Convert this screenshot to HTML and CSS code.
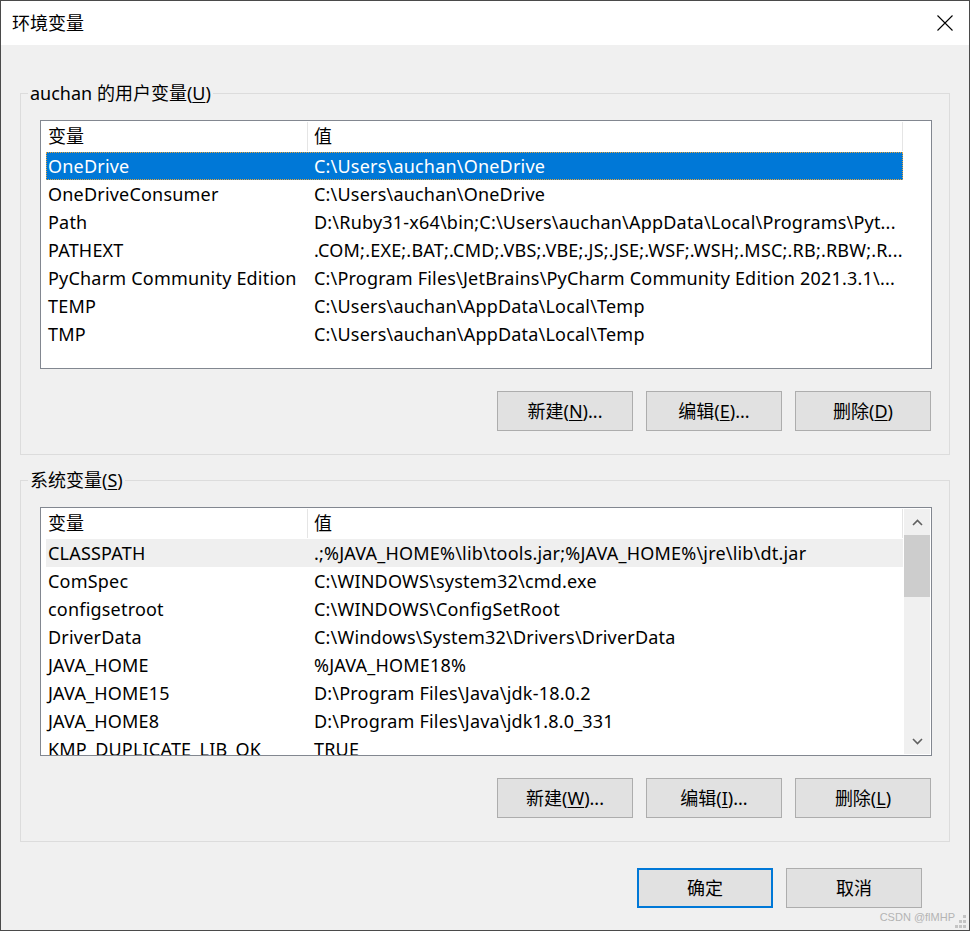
FILE: index.html
```html
<!DOCTYPE html>
<html lang="zh-CN">
<head>
  <meta charset="UTF-8">
  <title>环境变量</title>
  <link rel="stylesheet" href="styles.css">
</head>
<body>
  <div class="window">
    <div class="titlebar">
      <span class="title">环境变量</span>
      <span class="close">
        <svg width="16" height="16" viewBox="0 0 16 16"><path d="M0.5 0.5L15.5 15.5M15.5 0.5L0.5 15.5" stroke="#000" stroke-width="1.1" fill="none"/></svg>
      </span>
    </div>

    <div class="client">
      <!-- 用户变量 -->
      <fieldset class="group">
        <legend>auchan 的用户变量(<u>U</u>)</legend>
        <div class="group-body">
          <div class="listview">
            <div class="lv-main">
              <div class="lv-head">
                <div class="hcol name">变量</div>
                <div class="hcol value">值</div>
              </div>
              <div class="lv-row selected"><div class="cell name">OneDrive</div><div class="cell value">C:\Users\auchan\OneDrive</div></div>
              <div class="lv-row"><div class="cell name">OneDriveConsumer</div><div class="cell value">C:\Users\auchan\OneDrive</div></div>
              <div class="lv-row"><div class="cell name">Path</div><div class="cell value">D:\Ruby31-x64\bin;C:\Users\auchan\AppData\Local\Programs\Pyt...</div></div>
              <div class="lv-row"><div class="cell name">PATHEXT</div><div class="cell value">.COM;.EXE;.BAT;.CMD;.VBS;.VBE;.JS;.JSE;.WSF;.WSH;.MSC;.RB;.RBW;.R...</div></div>
              <div class="lv-row"><div class="cell name">PyCharm Community Edition</div><div class="cell value">C:\Program Files\JetBrains\PyCharm Community Edition 2021.3.1\...</div></div>
              <div class="lv-row"><div class="cell name">TEMP</div><div class="cell value">C:\Users\auchan\AppData\Local\Temp</div></div>
              <div class="lv-row"><div class="cell name">TMP</div><div class="cell value">C:\Users\auchan\AppData\Local\Temp</div></div>
            </div>
          </div>
          <div class="btn-row">
            <button class="btn">新建(<u>N</u>)...</button>
            <button class="btn">编辑(<u>E</u>)...</button>
            <button class="btn">删除(<u>D</u>)</button>
          </div>
        </div>
      </fieldset>

      <!-- 系统变量 -->
      <fieldset class="group">
        <legend>系统变量(<u>S</u>)</legend>
        <div class="group-body">
          <div class="listview">
            <div class="lv-main">
              <div class="lv-head">
                <div class="hcol name">变量</div>
                <div class="hcol value">值</div>
              </div>
              <div class="lv-row hot"><div class="cell name">CLASSPATH</div><div class="cell value">.;%JAVA_HOME%\lib\tools.jar;%JAVA_HOME%\jre\lib\dt.jar</div></div>
              <div class="lv-row"><div class="cell name">ComSpec</div><div class="cell value">C:\WINDOWS\system32\cmd.exe</div></div>
              <div class="lv-row"><div class="cell name">configsetroot</div><div class="cell value">C:\WINDOWS\ConfigSetRoot</div></div>
              <div class="lv-row"><div class="cell name">DriverData</div><div class="cell value">C:\Windows\System32\Drivers\DriverData</div></div>
              <div class="lv-row"><div class="cell name">JAVA_HOME</div><div class="cell value">%JAVA_HOME18%</div></div>
              <div class="lv-row"><div class="cell name">JAVA_HOME15</div><div class="cell value">D:\Program Files\Java\jdk-18.0.2</div></div>
              <div class="lv-row"><div class="cell name">JAVA_HOME8</div><div class="cell value">D:\Program Files\Java\jdk1.8.0_331</div></div>
              <div class="lv-row"><div class="cell name">KMP_DUPLICATE_LIB_OK</div><div class="cell value">TRUE</div></div>
            </div>
            <div class="scrollbar">
              <div class="sb-arrow">
                <svg width="11" height="7" viewBox="0 0 11 7"><path d="M1 6L5.5 1.5L10 6" stroke="#606060" stroke-width="1.6" fill="none"/></svg>
              </div>
              <div class="sb-track"><div class="sb-thumb"></div></div>
              <div class="sb-arrow">
                <svg width="11" height="7" viewBox="0 0 11 7"><path d="M1 1L5.5 5.5L10 1" stroke="#606060" stroke-width="1.6" fill="none"/></svg>
              </div>
            </div>
          </div>
          <div class="btn-row">
            <button class="btn">新建(<u>W</u>)...</button>
            <button class="btn">编辑(<u>I</u>)...</button>
            <button class="btn">删除(<u>L</u>)</button>
          </div>
        </div>
      </fieldset>

      <div class="dialog-buttons">
        <button class="btn default">确定</button>
        <button class="btn">取消</button>
      </div>
    </div>

    <span class="watermark">CSDN @flMHP</span>
    <svg class="grip" width="11" height="13" viewBox="0 0 11 13">
      <rect x="8" y="0" width="3" height="3" fill="#c4c4c4"/>
      <rect x="4" y="5" width="3" height="3" fill="#c4c4c4"/>
      <rect x="8" y="5" width="3" height="3" fill="#c4c4c4"/>
      <rect x="0" y="10" width="3" height="3" fill="#c4c4c4"/>
      <rect x="4" y="10" width="3" height="3" fill="#c4c4c4"/>
      <rect x="8" y="10" width="3" height="3" fill="#c4c4c4"/>
    </svg>
  </div>
</body>
</html>
```

FILE: styles.css
```css
* { box-sizing: border-box; }
body { margin: 0; font-family: "Segoe UI", "Noto Sans", "Noto Sans CJK SC", sans-serif; font-size: 18px; color: #000; }
u { text-decoration: underline; text-underline-offset: 2px; text-decoration-thickness: 1px; }

.window { width: 970px; height: 931px; border: 1px solid #4a4a4a; background: #f0f0f0; display: flex; flex-direction: column; position: relative; }

/* Title bar */
.titlebar { height: 44px; background: #fff; display: flex; align-items: center; justify-content: space-between; padding: 0 16px 0 11px; flex-shrink: 0; }
.title { font-size: 18px; line-height: 24px; }
.close { display: flex; width: 16px; height: 16px; }

/* Client area */
.client { flex: 1; padding: 36px 19px 0 19px; }
.group { margin: 0 0 13px 0; padding: 0; border: 1px solid #dcdcdc; min-width: 0; }
.group legend { margin-left: 7px; padding: 0 2px; line-height: 24px; height: 24px; }
.group-body { padding: 15px 17px 23px 19px; }

/* List view */
.listview { height: 249px; background: #fff; border: 1px solid #828790; display: flex; overflow: hidden; }
.lv-main { flex: 1; overflow: hidden; }
.lv-head { display: grid; grid-template-columns: 262px 595px; width: 857px; margin-left: 5px; height: 31px; padding-top: 1px; }
.hcol { line-height: 28px; border-right: 1px solid #e5e5e5; height: 29px; white-space: nowrap; }
.hcol.name { padding-left: 2px; }
.hcol.value { padding-left: 6px; }
.lv-row { display: grid; grid-template-columns: 262px 595px; width: 857px; margin-left: 5px; height: 28px; line-height: 28px; white-space: nowrap; letter-spacing: 0.2px; }
.cell { overflow: hidden; }
.cell.name { padding-left: 2px; }
.cell.value { padding-left: 6px; }
.lv-row.selected { background: #0078d7; color: #fff; outline: 1px dotted #e6a43c; outline-offset: -1px; }
.lv-row.hot { background: #efefef; }

/* Scrollbar */
.scrollbar { width: 26px; margin: 1px 1px 1px 0; background: #f0f0f0; display: flex; flex-direction: column; flex-shrink: 0; }
.sb-arrow { height: 26px; display: flex; align-items: center; justify-content: center; flex-shrink: 0; }
.sb-track { flex: 1; }
.sb-thumb { height: 62px; background: #cdcdcd; }

/* Buttons */
.btn-row { display: flex; justify-content: flex-end; gap: 13px; margin-top: 22px; padding-right: 1px; }
.btn { width: 136px; height: 40px; background: #e1e1e1; border: 1px solid #adadad; font-family: inherit; font-size: 18px; color: #000; padding: 0; line-height: 36px; }
.btn.default { border: 2px solid #0078d7; }
.dialog-buttons { display: flex; justify-content: flex-end; gap: 13px; margin-top: 26px; padding-right: 28px; }

/* Watermark overlay */
.watermark { position: absolute; right: 14px; bottom: 6px; font-family: "Liberation Sans", Arial, sans-serif; font-size: 11px; color: #b4b4b4; line-height: 13px; }
.grip { position: absolute; right: 3px; bottom: 2px; }
```
